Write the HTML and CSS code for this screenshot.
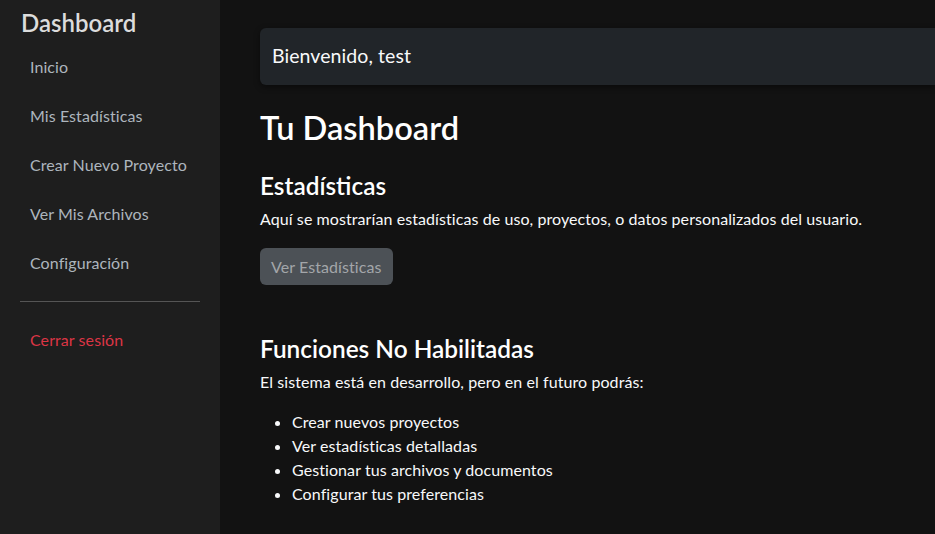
FILE: index.html
```
<!DOCTYPE html>
<html lang="es">
<head>
<meta charset="utf-8">
<title>Dashboard</title>
<link rel="stylesheet" href="styles.css">
</head>
<body>
<div class="layout">
  <aside class="sidebar">
    <h2 class="brand">Dashboard</h2>
    <nav class="nav">
      <a class="nav-link" href="#">Inicio</a>
      <a class="nav-link" href="#">Mis Estadísticas</a>
      <a class="nav-link" href="#">Crear Nuevo Proyecto</a>
      <a class="nav-link" href="#">Ver Mis Archivos</a>
      <a class="nav-link" href="#">Configuración</a>
    </nav>
    <hr class="divider">
    <a class="nav-link logout" href="#">Cerrar sesión</a>
  </aside>
  <main class="main">
    <div class="topbar">Bienvenido, test</div>
    <h1 class="title">Tu Dashboard</h1>
    <section class="stats">
      <h2 class="section-title">Estadísticas</h2>
      <p class="text">Aquí se mostrarían estadísticas de uso, proyectos, o datos personalizados del usuario.</p>
      <button class="btn" disabled>Ver Estadísticas</button>
    </section>
    <section class="future">
      <h2 class="section-title">Funciones No Habilitadas</h2>
      <p class="text">El sistema está en desarrollo, pero en el futuro podrás:</p>
      <ul class="list">
        <li>Crear nuevos proyectos</li>
        <li>Ver estadísticas detalladas</li>
        <li>Gestionar tus archivos y documentos</li>
        <li>Configurar tus preferencias</li>
      </ul>
    </section>
  </main>
</div>
</body>
</html>
```
FILE: styles.css
```
html, body {
  margin: 0;
  padding: 0;
  height: 100%;
  overflow: hidden;
}
body {
  background: #121212;
  color: #f8f9fa;
  font-family: Lato, "Noto Sans", sans-serif;
  font-size: 16px;
  letter-spacing: 0.08px;
  line-height: 1.5;
}
.layout {
  display: flex;
  min-height: 100%;
}
.sidebar {
  width: 220px;
  flex: 0 0 220px;
  box-sizing: border-box;
  background: #1e1e1e;
  padding: 8px 20px 20px;
  min-height: 534px;
}
.brand {
  margin: 0 0 4px 1px;
  font-size: 24px;
  font-weight: 600;
  line-height: 30px;
  color: #dcdcdc;
  letter-spacing: 0;
}
.nav {
  display: flex;
  flex-direction: column;
}
.nav-link {
  display: block;
  padding: 12.5px 10px;
  line-height: 24px;
  color: #adb5bd;
  text-decoration: none;
}
.divider {
  margin: 14px 0 14px;
  border: 0;
  border-top: 1px solid #555;
}
.logout {
  color: #dc3545;
  padding-top: 12px;
}
.main {
  flex: 1;
  padding: 28px 0 0 40px;
  min-width: 0;
}
.topbar {
  height: 57px;
  box-sizing: border-box;
  padding: 0 12px 1px;
  display: flex;
  align-items: center;
  background: #212529;
  border-radius: 6px 0 0 6px;
  box-shadow: 0 2px 6px rgba(0, 0, 0, 0.45);
  font-size: 19.5px;
  color: #f8f9fa;
}
.title {
  margin: 24px 0 24px;
  font-size: 32.6px;
  font-weight: 600;
  line-height: 38px;
  color: #fff;
  letter-spacing: 0;
}
.section-title {
  margin: 0 0 7px;
  font-size: 24.4px;
  font-weight: 600;
  line-height: 29px;
  color: #fff;
  letter-spacing: 0;
}
.text {
  margin: 0;
  line-height: 24px;
}
.btn {
  margin-top: 17px;
  height: 37px;
  padding: 0 11px;
  border: 0;
  border-radius: 6px;
  background: #4c5156;
  color: #a3a6a9;
  font-family: inherit;
  font-size: 16px;
  letter-spacing: 0.08px;
}
.future {
  margin-top: 49px;
}
.list {
  margin: 16px 0 0;
  padding-left: 32px;
  font-size: 16px;
}
.list li {
  line-height: 24px;
}
```
